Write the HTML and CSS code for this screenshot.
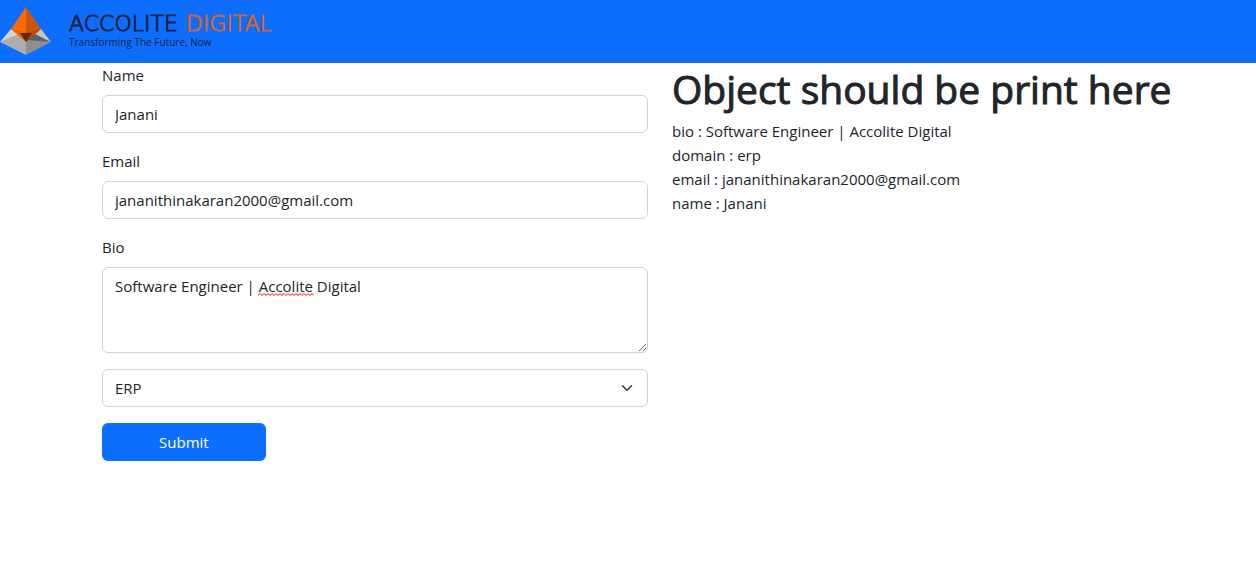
FILE: index.html
```html
<!DOCTYPE html>
<html lang="en">
<head>
<meta charset="utf-8">
<title>Accolite Digital</title>
<link rel="stylesheet" href="styles.css">
</head>
<body>
<header class="navbar">
  <svg class="logo" viewBox="0 0 52 50" aria-hidden="true">
    <path fill="#d3d3d3" d="M11 23 0 36l26-4z"/>
    <path fill="#adadad" d="M0 36 19 28l7 5v16z"/>
    <path fill="#858585" d="M40 23 51 36 26 34z"/>
    <path fill="#606060" d="M51 36 26 34l9-6z"/>
    <path fill="#8e8e8e" d="M26 34l25 2-25 13z"/>
    <path fill="#c4c4c4" d="M41 23l10 13-16-8z"/>
    <path fill="#ff6a00" d="M26 1 11 23l15 5z"/>
    <path fill="#cb560b" d="M26 1 41 23l-15 5z"/>
    <path fill="#e86100" d="M11 23l15 4v9z"/>
    <path fill="#b84c08" d="M41 23l-15 4v9z"/>
    <path fill="#5b2c0c" d="M20 27h12l-6 9z"/>
  </svg>
  <div class="brand">
    <div class="brand-name">ACCOLITE<span class="brand-accent">DIGITAL</span></div>
    <div class="tagline">Transforming The Future, Now</div>
  </div>
</header>
<main class="page">
  <form class="form">
    <div class="field">
      <label for="name">Name</label>
      <input class="control" id="name" type="text" value="Janani">
    </div>
    <div class="field">
      <label for="email">Email</label>
      <input class="control" id="email" type="email" value="jananithinakaran2000@gmail.com">
    </div>
    <div class="field">
      <label for="bio">Bio</label>
      <div class="bio-box">
        <textarea class="control bio" id="bio" rows="3">Software Engineer | Accolite Digital</textarea>
        <svg class="squiggle" viewBox="0 0 56 3" aria-hidden="true"><path fill="none" stroke="#f00" d="M0 2.5l2-2 2 2 2-2 2 2 2-2 2 2 2-2 2 2 2-2 2 2 2-2 2 2 2-2 2 2 2-2 2 2 2-2 2 2 2-2 2 2 2-2 2 2 2-2 2 2 2-2 2 2 2-2 2 2"/></svg>
      </div>
    </div>
    <div class="select-box">
      <select class="control select" aria-label="Domain"><option>ERP</option></select>
      <svg class="chevron" viewBox="0 0 16 16" aria-hidden="true"><path fill="none" stroke="#343a40" stroke-linecap="round" stroke-linejoin="round" stroke-width="2" d="m2 5 6 6 6-6"/></svg>
    </div>
    <button class="submit" type="button">Submit</button>
  </form>
  <section>
    <h1>Object should be print here</h1>
    <div>bio : Software Engineer | Accolite Digital</div>
    <div>domain : erp</div>
    <div>email : jananithinakaran2000@gmail.com</div>
    <div>name : Janani</div>
  </section>
</main>
</body>
</html>
```
FILE: styles.css
```css
* { box-sizing: border-box; }
body {
  margin: 0;
  background: #fff;
  color: #212529;
  font: 15px/24px "Segoe UI", "Open Sans", sans-serif;
}
.navbar {
  display: flex;
  align-items: flex-start;
  gap: 17px;
  height: 63px;
  padding-top: 6px;
  background: #0d6efd;
}
.logo { width: 52px; height: 50px; }
.brand { padding-top: 7px; color: #1c2340; }
.brand-name {
  display: flex;
  gap: 8px;
  font: 200 22px/22px "DejaVu Sans", sans-serif;
  -webkit-text-stroke: 1px currentColor;
}
.brand-accent { color: #d4622a; }
.tagline { font: 10px/14px "Open Sans", sans-serif; }
.page {
  display: grid;
  grid-template-columns: 1fr 1fr;
  gap: 24px;
  padding: 0 38px 0 102px;
}
.field { margin-bottom: 16px; }
.field label { display: block; margin-bottom: 8px; }
.control {
  display: block;
  width: 100%;
  height: 38px;
  margin: 0;
  padding: 6px 12px;
  border: 1px solid #ced4da;
  border-radius: 6px;
  background: #fff;
  color: inherit;
  font: inherit;
}
.bio-box, .select-box { position: relative; }
.bio { height: 86px; resize: vertical; }
.squiggle { position: absolute; left: 156px; top: 26px; width: 56px; height: 3px; }
.select-box { margin-bottom: 16px; }
.select { appearance: none; }
.chevron {
  position: absolute;
  right: 15px;
  top: 13px;
  width: 12px;
  height: 12px;
  pointer-events: none;
}
.submit {
  width: 30%;
  height: 38px;
  border: 0;
  border-radius: 6px;
  background: #0d6efd;
  color: #fff;
  font: inherit;
}
h1 {
  margin: 0;
  padding: 2px 0 6px;
  font-size: 39px;
  font-weight: 400;
  line-height: 48px;
  -webkit-text-stroke: 1px currentColor;
}
```
